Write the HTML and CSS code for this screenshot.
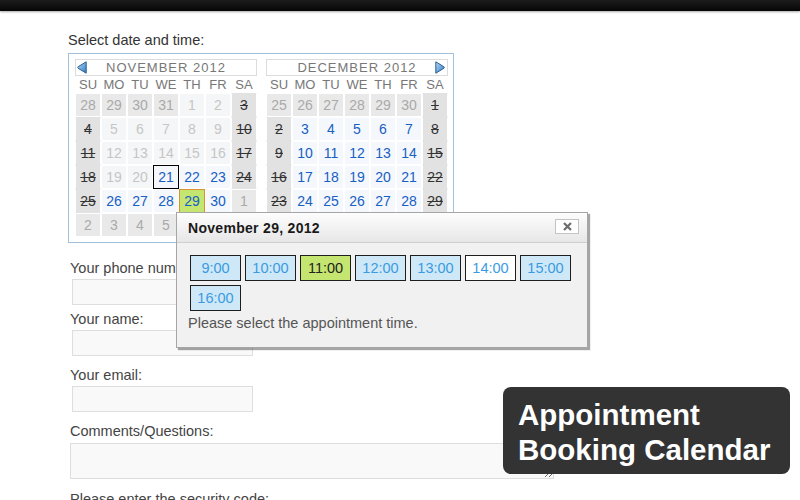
FILE: index.html
```html
<!DOCTYPE html>
<html lang="en">
<head>
<meta charset="utf-8">
<title>Appointment Booking Calendar</title>
<link rel="stylesheet" href="styles.css">
</head>
<body>
<div class="topbar"></div>
<main class="page">
  <p class="intro">Select date and time:</p>
  <div class="cal">
    <div class="month">
      <div class="month-head">
        <svg class="arrow" width="10" height="13" viewBox="0 0 10 13"><defs><linearGradient id="ga" x1="0" y1="0" x2="1" y2="1"><stop offset="0" stop-color="#b7dcf7"/><stop offset="1" stop-color="#2a78c4"/></linearGradient></defs><path d="M9.2 0.8 L9.2 12.2 L1.2 7.3 Q0.2 6.5 1.2 5.7 Z" fill="url(#ga)" stroke="#2b5d92" stroke-width="1" stroke-linejoin="round"/></svg>
        <span class="mtitle">NOVEMBER 2012</span>
        <span></span>
      </div>
      <div class="dow"><span>SU</span><span>MO</span><span>TU</span><span>WE</span><span>TH</span><span>FR</span><span>SA</span></div>
      <div class="days">
        <span class="d o">28</span><span class="d o">29</span><span class="d o">30</span><span class="d o">31</span><span class="d p">1</span><span class="d p">2</span><span class="d w">3</span>
        <span class="d w">4</span><span class="d p">5</span><span class="d p">6</span><span class="d p">7</span><span class="d p">8</span><span class="d p">9</span><span class="d w">10</span>
        <span class="d w">11</span><span class="d p">12</span><span class="d p">13</span><span class="d p">14</span><span class="d p">15</span><span class="d p">16</span><span class="d w">17</span>
        <span class="d w">18</span><span class="d p">19</span><span class="d p">20</span><span class="d a today">21</span><span class="d a">22</span><span class="d a">23</span><span class="d w">24</span>
        <span class="d w">25</span><span class="d a">26</span><span class="d a">27</span><span class="d a">28</span><span class="d a sel">29</span><span class="d a">30</span><span class="d o">1</span>
        <span class="d o">2</span><span class="d o">3</span><span class="d o">4</span><span class="d o">5</span><span class="d o">6</span><span class="d o">7</span><span class="d o">8</span>
      </div>
    </div>
    <div class="month">
      <div class="month-head">
        <span></span>
        <span class="mtitle">DECEMBER 2012</span>
        <svg class="arrow arrow-next" width="10" height="13" viewBox="0 0 10 13"><defs><linearGradient id="gb" x1="0" y1="0" x2="1" y2="1"><stop offset="0" stop-color="#b7dcf7"/><stop offset="1" stop-color="#2a78c4"/></linearGradient></defs><path d="M0.8 0.8 L0.8 12.2 L8.8 7.3 Q9.8 6.5 8.8 5.7 Z" fill="url(#gb)" stroke="#2b5d92" stroke-width="1" stroke-linejoin="round"/></svg>
      </div>
      <div class="dow"><span>SU</span><span>MO</span><span>TU</span><span>WE</span><span>TH</span><span>FR</span><span>SA</span></div>
      <div class="days">
        <span class="d o">25</span><span class="d o">26</span><span class="d o">27</span><span class="d o">28</span><span class="d o">29</span><span class="d o">30</span><span class="d w">1</span>
        <span class="d w">2</span><span class="d a">3</span><span class="d a">4</span><span class="d a">5</span><span class="d a">6</span><span class="d a">7</span><span class="d w">8</span>
        <span class="d w">9</span><span class="d a">10</span><span class="d a">11</span><span class="d a">12</span><span class="d a">13</span><span class="d a">14</span><span class="d w">15</span>
        <span class="d w">16</span><span class="d a">17</span><span class="d a">18</span><span class="d a">19</span><span class="d a">20</span><span class="d a">21</span><span class="d w">22</span>
        <span class="d w">23</span><span class="d a">24</span><span class="d a">25</span><span class="d a">26</span><span class="d a">27</span><span class="d a">28</span><span class="d w">29</span>
        <span class="d w">30</span><span class="d a">31</span><span class="d o">1</span><span class="d o">2</span><span class="d o">3</span><span class="d o">4</span><span class="d o">5</span>
      </div>
    </div>
  </div>

  <form class="form">
    <div class="field">
      <label class="lbl">Your phone number:</label>
      <input class="inp" type="text">
    </div>
    <div class="field field-name">
      <label class="lbl">Your name:</label>
      <input class="inp" type="text">
    </div>
    <div class="field">
      <label class="lbl">Your email:</label>
      <input class="inp" type="text">
    </div>
    <div class="field">
      <label class="lbl">Comments/Questions:</label>
      <textarea class="area"></textarea>
    </div>
    <div class="field field-code">
      <label class="lbl">Please enter the security code:</label>
    </div>
  </form>
</main>

<div class="popup">
  <div class="popup-head">
    <span class="popup-title">November 29, 2012</span>
    <span class="close"><svg width="9" height="9" viewBox="0 0 9 9"><path d="M1 1 L8 8 M8 1 L1 8" stroke="#6d6d6d" stroke-width="2.2" stroke-linecap="butt"/></svg></span>
  </div>
  <div class="popup-body">
    <div class="times">
      <span class="t">9:00</span>
      <span class="t">10:00</span>
      <span class="t t-sel">11:00</span>
      <span class="t">12:00</span>
      <span class="t">13:00</span>
      <span class="t t-free">14:00</span>
      <span class="t">15:00</span>
      <span class="t">16:00</span>
    </div>
    <p class="msg">Please select the appointment time.</p>
  </div>
</div>

<div class="badge">Appointment<br>Booking Calendar</div>
</body>
</html>
```

FILE: styles.css
```css
html, body {
  margin: 0;
  overflow: hidden;
}

body {
  font-family: "Liberation Sans", Arial, sans-serif;
  color: #444;
  background: #fff;
}

.topbar {
  height: 11px;
  background: linear-gradient(#1c1c1c, #060606);
  box-shadow: 0 1px 2px rgba(0, 0, 0, 0.35);
}

.page {
  padding: 21px 0 0 68px;
}

.intro {
  margin: 0;
  font-size: 14.5px;
  line-height: 17px;
  color: #333;
}

/* calendar */
.cal {
  margin-top: 4px;
  width: 386px;
  box-sizing: border-box;
  border: 1px solid #a3c1dc;
  padding: 5px 5px 5px 6px;
  display: flex;
  gap: 9px;
  background: #fff;
}

.month {
  width: 182px;
}

.month-head {
  height: 17px;
  box-sizing: border-box;
  border: 1px solid #dcdcdc;
  display: grid;
  grid-template-columns: 12px 1fr 12px;
  align-items: center;
}

.mtitle {
  text-align: center;
  font-size: 13px;
  letter-spacing: 1px;
  line-height: 15px;
  color: #777;
}

.arrow {
  display: block;
  margin-left: 1px;
}

.arrow-next {
  margin-left: 0;
}

.dow {
  display: grid;
  grid-template-columns: repeat(7, 26px);
  height: 17px;
  line-height: 18px;
  font-size: 13px;
  color: #777;
  text-align: center;
}

.days {
  display: grid;
  grid-template-columns: repeat(7, 26px);
  grid-auto-rows: 24px;
  font-size: 14px;
  text-align: center;
}

.d {
  box-sizing: border-box;
  border: 1px solid #fff;
  line-height: 22px;
}

.o {
  background: #e9e9e9;
  color: #aaa;
}

.p {
  background: #f4f6f8;
  color: #c6c6c6;
}

.w {
  background: #e2e2e2;
  border-top-color: #e2e2e2;
  border-bottom-color: #e2e2e2;
  color: #333;
  text-decoration: line-through;
}

.a {
  background: #f4f7fb;
  color: #1760c4;
}

.today {
  border-color: #000;
}

.sel {
  background: #c4e570;
  border-color: #d9902e;
}

/* form */
.form {
  margin-top: 17px;
}

.field + .field {
  margin-top: 11px;
}

.field.field-name {
  margin-top: 6px;
}

.field.field-code {
  margin-top: 12px;
}

.lbl {
  display: block;
  font-size: 14.5px;
  line-height: 17px;
  color: #444;
  margin-left: 2px;
}

.inp {
  display: block;
  margin: 2px 0 0 4px;
  width: 181px;
  height: 26px;
  box-sizing: border-box;
  border: 1px solid #dedede;
  background: #f9f9f9;
}

.area {
  display: block;
  margin: 3px 0 0 2px;
  width: 484px;
  height: 36px;
  box-sizing: border-box;
  border: 1px solid #dedede;
  background: #f9f9f9;
}

/* popup */
.popup {
  position: absolute;
  left: 176px;
  top: 212px;
  width: 412px;
  height: 136px;
  box-sizing: border-box;
  border: 1px solid #a6a6a6;
  background: #f1f1f1;
  box-shadow: 2px 2px 1px rgba(0, 0, 0, 0.35);
}

.popup-head {
  height: 30px;
  box-sizing: border-box;
  border-bottom: 1px solid #cfcfcf;
  background: linear-gradient(#fdfdfd, #e7e7e7);
  display: flex;
  align-items: center;
  justify-content: space-between;
  padding: 0 8px 0 11px;
}

.popup-title {
  font-weight: bold;
  font-size: 14px;
  letter-spacing: 0.3px;
  color: #1a1a1a;
}

.close {
  width: 24px;
  height: 15px;
  box-sizing: border-box;
  border: 1px solid #c4c4c4;
  background: #fff;
  display: flex;
  align-items: center;
  justify-content: center;
  margin-top: -2px;
}

.close svg {
  display: block;
}

.popup-body {
  padding: 12px 0 0 11px;
}

.times {
  display: flex;
  flex-wrap: wrap;
  gap: 4px;
  width: 381px;
  margin-left: 2px;
}

.t {
  width: 51px;
  height: 26px;
  box-sizing: border-box;
  border: 1px solid #1e1e1e;
  background: #cfe8f8;
  color: #3a9be0;
  font-size: 14.5px;
  line-height: 24px;
  text-align: center;
}

.t-sel {
  background: #c4e570;
  color: #222;
}

.t-free {
  background: #fff;
}

.msg {
  margin: 4px 0 0;
  font-size: 14.5px;
  line-height: 17px;
  color: #555;
}

/* badge */
.badge {
  position: absolute;
  left: 503px;
  top: 387px;
  width: 287px;
  height: 87px;
  box-sizing: border-box;
  padding: 10px 0 0 15px;
  background: #333;
  border-radius: 8px;
  color: #fff;
  font-family: "Liberation Sans", Arial, sans-serif;
  font-weight: bold;
  font-size: 29.5px;
  line-height: 35px;
}
```
